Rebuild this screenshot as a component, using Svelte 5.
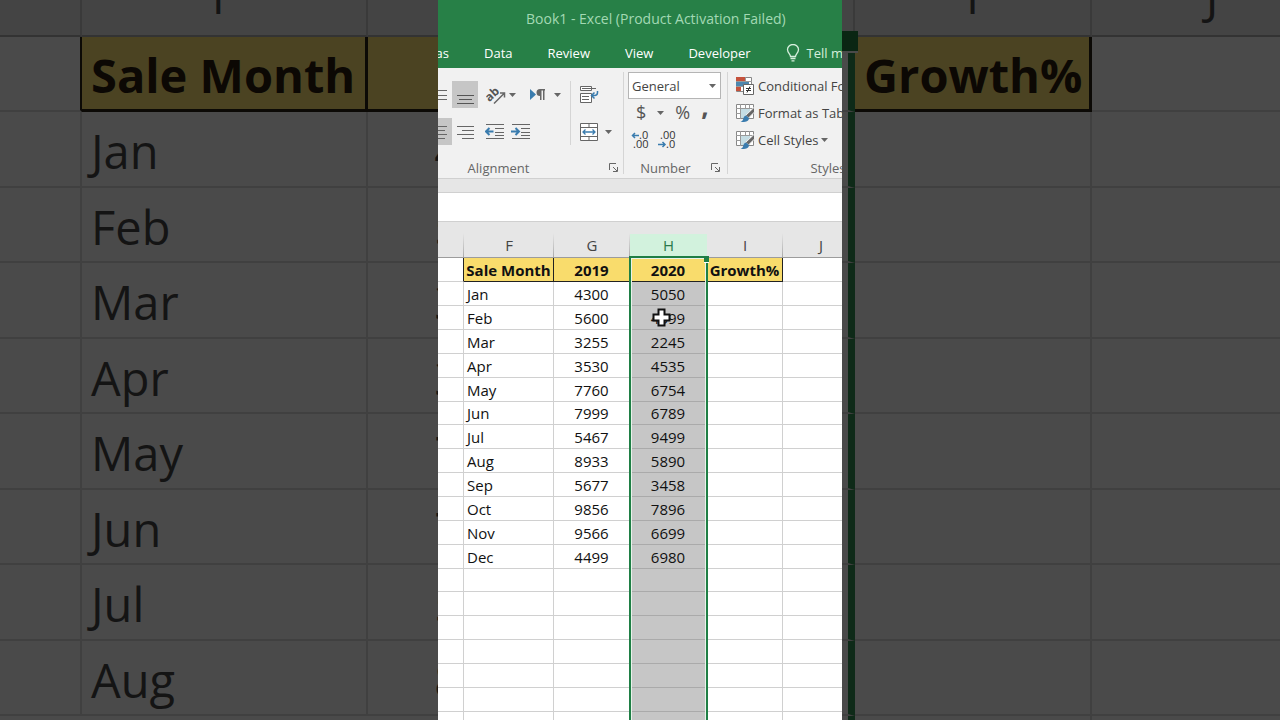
<script lang="ts">
  const columns = ['F', 'G', 'H', 'I', 'J'];

  const sales = [
    { month: 'Jan', y2019: 4300, y2020: 5050 },
    { month: 'Feb', y2019: 5600, y2020: 4599 },
    { month: 'Mar', y2019: 3255, y2020: 2245 },
    { month: 'Apr', y2019: 3530, y2020: 4535 },
    { month: 'May', y2019: 7760, y2020: 6754 },
    { month: 'Jun', y2019: 7999, y2020: 6789 },
    { month: 'Jul', y2019: 5467, y2020: 9499 },
    { month: 'Aug', y2019: 8933, y2020: 5890 },
    { month: 'Sep', y2019: 5677, y2020: 3458 },
    { month: 'Oct', y2019: 9856, y2020: 7896 },
    { month: 'Nov', y2019: 9566, y2020: 6699 },
    { month: 'Dec', y2019: 4499, y2020: 6980 },
  ];

  const blankRows = Array.from({ length: 7 });
  const tabs = ['Data', 'Review', 'View', 'Developer'];

  let activeTab = $state('');
  let format = $state('General');
</script>

{#snippet caret()}
  <svg class="caret" width="7" height="4" viewBox="0 0 7 4" aria-hidden="true"><path d="M0 0h7L3.5 4z" fill="#666" /></svg>
{/snippet}

{#snippet launcher(label: string)}
  <button class="launcher" aria-label={label}>
    <svg width="10" height="10" viewBox="0 0 10 10" fill="none" stroke="#666">
      <path d="M.5 7V.5H7M4 4l4 4M8.5 4v4.5H4" />
    </svg>
  </button>
{/snippet}

{#snippet brushTable()}
  <svg width="20" height="20" viewBox="0 0 20 20" aria-hidden="true">
    <path d="M1.5 1.5h17v14h-17z" fill="#fff" stroke="#888" />
    <path d="M6 6h9v9H6z" fill="#c5dde4" />
    <path d="M1 5.500h18M1 10.500h5M5.500 1v15M10.500 1v5M14.500 1v5" stroke="#999" fill="none" />
    <path d="M19.500 4v5l-6 6-3-2.500z" fill="#666" stroke="#f1f1f1" />
    <path d="M11 12.500l3 2.500c0 3-3 4.500-8.500 4 2-1 2.500-2 3-4 .5-1.500 1.500-2.300 2.500-2.500z" fill="#3a7cae" />
  </svg>
{/snippet}

<main class="stage">
  <div class="backdrop" aria-hidden="true">
    <table class="zoomed left">
      <colgroup><col class="z-edge" /><col class="z-month" /><col class="z-year" /></colgroup>
      <thead>
        <tr><th></th><th>F</th><th></th></tr>
      </thead>
      <tbody>
        <tr class="titles"><td></td><td>Sale Month</td><td></td></tr>
        {#each sales.slice(0, 8) as row}
          <tr><td></td><td>{row.month}</td><td class="num">{row.y2019}</td></tr>
        {/each}
      </tbody>
    </table>
  </div>

  <section class="excel" aria-label="Excel">
    <header class="titlebar">
      <p class="title">Book1 - Excel (Product Activation Failed)</p>
      <nav class="tabs">
        <button class="tab partial">as</button>
        {#each tabs as tab}
          <button class="tab" aria-pressed={activeTab === tab} onclick={() => (activeTab = tab)}>{tab}</button>
        {/each}
        <button class="tab tell">
          <svg width="14" height="18" viewBox="0 0 14 18" fill="none" stroke="#d6efdd" stroke-width="1.300" aria-hidden="true">
            <path d="M4.500 12.500c0-2.500-3-3.500-3-7a5.500 5 0 0 1 11 0c0 3.500-3 4.500-3 7zM4.500 14.500h5M5.500 16.800h3" />
          </svg>
          Tell me
        </button>
      </nav>
    </header>

    <div class="ribbon">
      <section class="group alignment">
        <div class="tools">
          <div class="align-rows">
            <div class="row">
              <button class="cut" aria-label="Middle align">
                <svg width="14" height="16" viewBox="0 0 14 16" stroke="#666"><path d="M0 3.500h9M0 8.500h9M0 12.500h9" /></svg>
              </button>
              <button class="square on" aria-label="Bottom align">
                <svg width="17" height="20" viewBox="0 0 17 20" stroke="#555"><path d="M0 10.500h17M2 14.500h13M0 18.500h17" /></svg>
              </button>
              <button class="drop" aria-label="Orientation">
                <svg width="20" height="18" viewBox="0 0 20 18" aria-hidden="true">
                  <text x="0" y="12" transform="rotate(-42 7 10)" font-family="Open Sans, sans-serif" font-size="12" font-weight="700" fill="#555">ab</text>
                  <path d="M8 17.500L18 7.500M14 7h4.500v4.500" fill="none" stroke="#666" stroke-width="1.500" />
                </svg>
                {@render caret()}
              </button>
              <button class="drop wide" aria-label="Text direction">
                <svg width="16" height="12" viewBox="0 0 16 12" aria-hidden="true">
                  <path d="M0 0l6 5.500-6 5.500z" fill="#3a7cae" />
                  <path d="M15 0h-5a3.500 3.500 0 0 0 0 7v4h1.500V1.500H13V11h1.500V1.500H15z" fill="#666" />
                </svg>
                {@render caret()}
              </button>
            </div>
            <div class="row">
              <button class="cut on" aria-label="Center">
                <svg width="14" height="16" viewBox="0 0 14 16" stroke="#666"><path d="M0 2.500h9M0 6.500h7M0 10.500h9M0 14.500h7" /></svg>
              </button>
              <button class="square" aria-label="Align right">
                <svg width="17" height="16" viewBox="0 0 17 16" stroke="#666"><path d="M0 2.500h17M5 6.500h12M0 10.500h17M5 14.500h12" /></svg>
              </button>
              <button class="square indent" aria-label="Decrease indent">
                <svg width="20" height="17" viewBox="0 0 20 17" aria-hidden="true">
                  <path d="M1 1.500h18M10 5.500h9M10 9.500h9M10 12.500h9M1 15.500h18" stroke="#666" />
                  <path d="M8.500 8.500H1M4.500 5L1 8.500 4.500 12" fill="none" stroke="#3a7cae" stroke-width="2" />
                </svg>
              </button>
              <button class="square" aria-label="Increase indent">
                <svg width="20" height="17" viewBox="0 0 20 17" aria-hidden="true">
                  <path d="M1 1.500h18M10 5.500h9M10 9.500h9M10 12.500h9M1 15.500h18" stroke="#666" />
                  <path d="M0 8.500h8M4.500 5L8 8.500 4.500 12" fill="none" stroke="#3a7cae" stroke-width="2" />
                </svg>
              </button>
            </div>
          </div>
          <div class="wrap-merge">
            <button class="merge" aria-label="Wrap text">
              <svg width="20" height="20" viewBox="0 0 20 20" aria-hidden="true">
                <path d="M1.500 1.500h11v4h-11zM1.500 8.500h11v9h-11z" fill="#fff" stroke="#666" />
                <path d="M3 3.500h14M3 11.500h7M3 14.500h7" stroke="#666" />
                <path d="M18.500 6v1.500c0 2-1 3-3 3H13M15.500 7.500l-3 3 3 3" fill="none" stroke="#3a7cae" stroke-width="1.500" />
              </svg>
            </button>
            <button class="merge" aria-label="Merge and center">
              <svg width="20" height="20" viewBox="0 0 20 20" aria-hidden="true">
                <path d="M1.500 1.500h17v17h-17zM1 5.500h18M1 14.500h18M10 1v4M10 15v4" fill="#fff" stroke="#666" />
                <path d="M4 10h12M6.500 7.500L4 10l2.500 2.500M13.500 7.500L16 10l-2.500 2.500" fill="none" stroke="#3a7cae" stroke-width="1.300" />
              </svg>
              {@render caret()}
            </button>
          </div>
        </div>
        <footer class="caption"><span>Alignment</span>{@render launcher('Alignment settings')}</footer>
      </section>

      <section class="group number">
        <div class="number-tools">
          <div class="format">
            <select aria-label="Number format" bind:value={format}>
              <option>General</option>
              <option>Number</option>
              <option>Currency</option>
            </select>
            {@render caret()}
          </div>
          <div class="symbols">
            <button aria-label="Accounting format">$</button>
            {@render caret()}
            <button aria-label="Percent style">%</button>
            <button class="comma" aria-label="Comma style">,</button>
          </div>
          <div class="decimals">
            <button aria-label="Increase decimal">
              <svg width="18" height="20" viewBox="0 0 18 20" aria-hidden="true">
                <g font-family="Open Sans, sans-serif" font-size="11" fill="#333"><text x="8" y="9">.0</text><text x="2" y="18">.00</text></g>
                <path d="M8 5.500H1.500M4 3L1.500 5.500 4 8" fill="none" stroke="#3a7cae" stroke-width="1.500" />
              </svg>
            </button>
            <button aria-label="Decrease decimal">
              <svg width="18" height="20" viewBox="0 0 18 20" aria-hidden="true">
                <g font-family="Open Sans, sans-serif" font-size="11" fill="#333"><text x="2" y="9">.00</text><text x="8" y="18">.0</text></g>
                <path d="M0 14.500h7M4.500 12L7 14.500 4.500 17" fill="none" stroke="#3a7cae" stroke-width="1.500" />
              </svg>
            </button>
          </div>
        </div>
        <footer class="caption"><span>Number</span>{@render launcher('Number settings')}</footer>
      </section>

      <section class="group styles">
        <div class="style-list">
          <button>
            <svg width="20" height="20" viewBox="0 0 20 20" aria-hidden="true">
              <path d="M1.500 1.500h15v14h-15z" fill="#fff" stroke="#888" />
              <path d="M1 1h9v4H1zM1 11h5v4H1z" fill="#c5523c" />
              <path d="M1 6h13v4H1z" fill="#4d86ae" />
              <path d="M1 5.500h16M1 10.500h16M10.500 1v5" stroke="#999" />
              <path d="M8.500 8.500h10v10h-10z" fill="#fff" stroke="#666" />
              <path d="M11 12.500h5M11 14.500h5M15 10.500l-3 6" stroke="#333" />
            </svg>
            Conditional Formatting
          </button>
          <button>{@render brushTable()}Format as Table</button>
          <button>{@render brushTable()}Cell Styles {@render caret()}</button>
        </div>
        <footer class="caption"><span>Styles</span></footer>
      </section>
    </div>

    <input class="formula" aria-label="Formula bar" />

    <table class="sheet">
      <colgroup>
        <col class="c-edge" /><col class="c-month" /><col class="c-year" /><col class="c-picked" /><col class="c-year" /><col class="c-year" />
      </colgroup>
      <thead>
        <tr>
          <th></th>
          {#each columns as name}
            <th class:picked={name === 'H'} scope="col">{name}</th>
          {/each}
        </tr>
      </thead>
      <tbody>
        <tr class="titles">
          <td></td>
          <td>Sale Month</td>
          <td>2019</td>
          <td class="anchor">2020<span class="selection"></span></td>
          <td>Growth%</td>
          <td></td>
        </tr>
        {#each sales as row}
          <tr>
            <td></td>
            <td>{row.month}</td>
            <td class="num">{row.y2019}</td>
            <td class="num picked">
              {row.y2020}
              {#if row.month === 'Feb'}
                <svg class="pointer" width="19" height="19" viewBox="0 0 19 19" aria-hidden="true">
                  <path d="M6.500 1.500h6v5h5v6h-5v5h-6v-5h-5v-6h5z" fill="#fff" stroke="#111" stroke-width="2" />
                </svg>
              {/if}
            </td>
            <td></td>
            <td></td>
          </tr>
        {/each}
        {#each blankRows as _}
          <tr><td></td><td></td><td></td><td class="picked"></td><td></td><td></td></tr>
        {/each}
      </tbody>
    </table>
  </section>

  <div class="backdrop" aria-hidden="true">
    <table class="zoomed right">
      <colgroup><col class="z-sliver" /><col class="z-growth" /><col class="z-year" /></colgroup>
      <thead>
        <tr><th></th><th>I</th><th>J</th></tr>
      </thead>
      <tbody>
        <tr class="titles"><td><span class="handle"></span></td><td>Growth%</td><td></td></tr>
        {#each sales.slice(0, 9) as _}
          <tr><td></td><td></td><td></td></tr>
        {/each}
      </tbody>
    </table>
  </div>
</main>

<style>
  :global(body) {
    margin: 0;
    background: #4a4a4a;
  }

  .stage {
    display: grid;
    grid-template-columns: 1fr 404px 1fr;
    height: 100vh;
    overflow: hidden;
    font-family: 'Open Sans', 'Noto Sans', sans-serif;
    font-size: 13px;
    color: #444;
  }

  button {
    display: flex;
    align-items: center;
    padding: 0;
    border: none;
    background: none;
    font: inherit;
    color: inherit;
    white-space: nowrap;
  }

  svg {
    display: block;
    flex-shrink: 0;
  }

  table {
    table-layout: fixed;
    border-collapse: separate;
    border-spacing: 0;
  }

  th,
  td {
    box-sizing: border-box;
    padding: 0;
    white-space: nowrap;
  }

  /* enlarged sheet behind the window */
  .backdrop {
    overflow: hidden;
    background: #4a4a4a;
  }

  .zoomed {
    margin-top: -44px;
    font-size: 47px;
    line-height: 60px;
    color: #141414;
  }

  .zoomed.left {
    width: 610px;
  }

  .zoomed.right {
    width: 492px;
  }

  .z-edge {
    width: 82px;
  }

  .z-month {
    width: 286px;
  }

  .z-year {
    width: 242px;
  }

  .z-sliver {
    width: 13px;
  }

  .z-growth {
    width: 237px;
  }

  .zoomed th {
    height: 81px;
    font-weight: 400;
    background: #444;
    border-right: 2px solid #3a3a3a;
    border-bottom: 2px solid #333;
  }

  .zoomed td {
    height: 76px;
    padding: 4px 0 0 9px;
    border-right: 2px solid #404040;
    border-bottom: 2px solid #404040;
  }

  .zoomed tr:nth-child(odd) td {
    height: 75px;
  }

  .zoomed .num {
    padding: 4px 0 0;
    text-align: center;
  }

  .zoomed .titles td {
    font-weight: 700;
    color: #0c0804;
  }

  .zoomed .titles td:nth-child(2),
  .zoomed.left .titles td:nth-child(3) {
    background: #4b4322;
    border-right: 3px solid #0c0a06;
    border-bottom: 3px solid #0c0a06;
  }

  .zoomed.left .titles td:first-child {
    border-right-color: #0c0a06;
  }

  .zoomed.right td:first-child {
    position: relative;
    padding: 0;
    border-right: 7px solid #0e2a18;
  }

  .handle {
    position: absolute;
    top: -6px;
    left: 0;
    width: 16px;
    height: 20px;
    background: #0a2613;
    border-bottom: 2px solid #4a4a4a;
  }

  /* Excel window */
  .excel {
    overflow: hidden;
    background: #fff;
  }

  .titlebar {
    background: #278047;
    color: #fff;
  }

  .title {
    margin: 0;
    padding-left: 88px;
    font-size: 14px;
    line-height: 38px;
    color: #a3d9b4;
    white-space: nowrap;
  }

  .tabs {
    display: flex;
    gap: 35px;
    height: 30px;
  }

  .tab.partial {
    width: 11px;
    justify-content: flex-end;
  }

  .tab.tell {
    gap: 7px;
    color: #d6efdd;
  }

  .ribbon {
    display: flex;
    height: 110px;
    background: #f1f1f1;
    border-bottom: 1px solid #d0d0d0;
  }

  .group {
    display: flex;
    flex-direction: column;
    justify-content: space-between;
    flex-shrink: 0;
    box-sizing: border-box;
    margin: 4px 0;
    border-right: 1px solid #d5d5d5;
  }

  .alignment {
    width: 186px;
  }

  .number {
    width: 104px;
    padding: 0 6px 0 4px;
  }

  .styles {
    width: 194px;
    padding-left: 7px;
  }

  .caption {
    display: flex;
    align-items: center;
    height: 12px;
    color: #666;
  }

  .caption span {
    flex: 1;
    text-align: center;
  }

  .alignment .caption {
    padding-right: 4px;
    margin-left: -50px;
  }

  .number .caption {
    margin-left: -8px;
  }

  .tools {
    display: flex;
    padding-top: 9px;
  }

  .align-rows,
  .wrap-merge {
    display: flex;
    flex-direction: column;
    gap: 10px;
  }

  .align-rows {
    width: 132px;
    border-right: 1px solid #d5d5d5;
  }

  .wrap-merge {
    padding-left: 8px;
  }

  .row {
    display: flex;
  }

  .cut,
  .square,
  .drop,
  .merge {
    height: 27px;
  }

  .cut {
    width: 14px;
  }

  .square {
    width: 26px;
    justify-content: center;
  }

  .indent {
    margin-left: 4px;
  }

  .on {
    background: #c6c6c6;
  }

  .drop {
    gap: 3px;
    padding-left: 8px;
  }

  .drop.wide {
    gap: 8px;
    padding-left: 14px;
  }

  .merge {
    gap: 6px;
  }

  .format {
    position: relative;
  }

  select {
    appearance: none;
    display: block;
    width: 100%;
    height: 27px;
    padding: 0 3px;
    border: 1px solid #b5b5b5;
    border-radius: 0;
    background: #fff;
    font: inherit;
    color: #444;
  }

  .format :global(.caret) {
    position: absolute;
    top: 12px;
    right: 5px;
    pointer-events: none;
  }

  .symbols {
    display: flex;
    align-items: center;
    gap: 11px;
    height: 27px;
    padding-left: 8px;
    font-size: 18px;
    line-height: 27px;
    color: #555;
  }

  .comma {
    padding-bottom: 12px;
    font-size: 26px;
    font-weight: 700;
  }

  .decimals {
    display: flex;
    gap: 9px;
    height: 27px;
    padding-left: 3px;
  }

  .style-list button {
    gap: 3px;
    height: 27px;
  }

  .formula {
    display: block;
    box-sizing: border-box;
    width: 100%;
    height: 43px;
    padding: 0 4px;
    border: solid #d0d0d0;
    border-width: 0 0 1px;
    border-top: 13px solid #e6e6e6;
    border-radius: 0;
    background: #fff;
    box-shadow: inset 0 1px #d0d0d0;
  }

  .sheet {
    width: 421px;
    font-size: 15px;
    line-height: 20px;
    color: #111;
  }

  .c-edge {
    width: 26px;
  }

  .c-month {
    width: 90px;
  }

  .c-year {
    width: 76px;
  }

  .c-picked {
    width: 77px;
  }

  .sheet th {
    height: 36px;
    padding-top: 11px;
    font-weight: 400;
    color: #444;
    background: linear-gradient(#e6e6e6, #aaa) right bottom / 1px 24px no-repeat #e6e6e6;
    border-bottom: 1px solid #9c9c9c;
  }

  .sheet th.picked {
    background: linear-gradient(#e6e6e6 12px, #d2f2dd 12px);
    color: #2b7a4b;
  }

  .sheet td {
    height: 24px;
    padding-left: 3px;
    border-right: 1px solid #d0d0d0;
    border-bottom: 1px solid #d0d0d0;
  }

  .sheet tr:nth-child(7n) td {
    height: 23px;
  }

  .sheet .num {
    padding: 0;
    text-align: center;
  }

  .sheet td.picked {
    position: relative;
    background: #c6c6c6;
    border-bottom-color: #aaa;
  }

  .sheet .titles td {
    padding: 0;
    font-weight: 700;
    text-align: center;
  }

  .sheet .titles td:nth-child(n + 2):nth-child(-n + 5) {
    background: #f9dc6c;
    border-right-color: #222;
    border-bottom-color: #222;
  }

  .sheet .titles td:first-child {
    border-right-color: #222;
  }

  .sheet .anchor {
    position: relative;
  }

  /* outline runs off the bottom of the window */
  .selection {
    position: absolute;
    top: -2px;
    left: -1px;
    right: -2px;
    z-index: 1;
    height: 100vh;
    border: 2px solid #1f7f45;
    box-shadow: inset 1px 1px #e8f3ea, inset -1px 0 #e8f3ea;
    pointer-events: none;
  }

  .selection::after {
    content: '';
    position: absolute;
    top: -2px;
    right: -3px;
    width: 5px;
    height: 6px;
    background: #1f7f45;
    border-bottom: 1px solid #fff;
  }

  .pointer {
    position: absolute;
    top: 2px;
    left: 22px;
    z-index: 2;
  }
</style>
